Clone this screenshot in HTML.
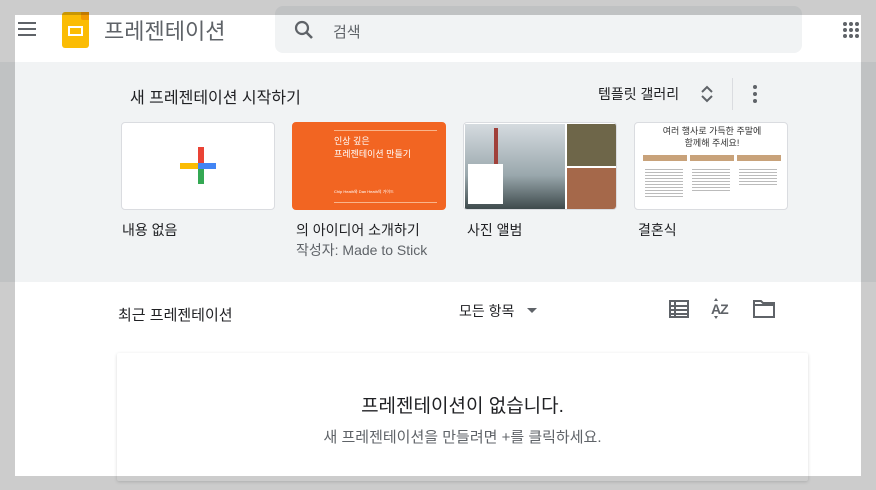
<!DOCTYPE html>
<html><head><meta charset="utf-8"><style>
*{margin:0;padding:0;box-sizing:border-box}
body{width:876px;height:490px;overflow:hidden;position:relative;background:#fff;font-family:"Liberation Sans","Noto Sans CJK KR",sans-serif;color:#202124}
.abs{position:absolute}
.ov{position:absolute;background:rgba(0,0,0,0.2);z-index:10}
.card{position:absolute;top:122px;width:154px;height:88px;border:1px solid #dadce0;border-radius:4px;background:#fff;overflow:hidden}
.lbl{position:absolute;top:220px;font-size:14px;color:#202124}
</style></head><body>
<div class="abs" style="left:18px;top:22px;width:18px;height:2px;background:#5f6368;box-shadow:0 6px 0 #5f6368,0 12px 0 #5f6368"></div>
<div class="abs" style="left:62px;top:12px;width:27px;height:36px;background:#fbbc04;border-radius:3px"></div>
<div class="abs" style="left:81px;top:12px;width:8px;height:8px;background:#f29900;border-bottom-left-radius:2px"></div>
<div class="abs" style="left:68px;top:26px;width:15px;height:10px;border:2px solid #fff"></div>
<div class="abs" style="left:104px;top:14px;font-size:22px;color:#5f6368">프레젠테이션</div>
<div class="abs" style="left:275px;top:6px;width:527px;height:47px;background:#f1f3f4;border-radius:8px"></div>
<svg class="abs" style="left:292px;top:18px" width="24" height="24" viewBox="0 0 24 24"><circle cx="10" cy="10" r="6" fill="none" stroke="#5f6368" stroke-width="2.2"/><path d="M14.5 14.5L20 20" stroke="#5f6368" stroke-width="2.6"/></svg>
<div class="abs" style="left:333px;top:21px;font-size:15px;color:#5f6368">검색</div>
<svg class="abs" style="left:843px;top:22px" width="18" height="16"><g fill="#5f6368"><circle cx="2" cy="2" r="2"/><circle cx="8" cy="2" r="2"/><circle cx="14" cy="2" r="2"/><circle cx="2" cy="8" r="2"/><circle cx="8" cy="8" r="2"/><circle cx="14" cy="8" r="2"/><circle cx="2" cy="14" r="2"/><circle cx="8" cy="14" r="2"/><circle cx="14" cy="14" r="2"/></g></svg>
<div class="abs" style="left:0;top:62px;width:876px;height:220px;background:#f1f3f4"></div>
<div class="abs" style="left:130px;top:84px;font-size:16px">새 프레젠테이션 시작하기</div>
<div class="abs" style="left:598px;top:84px;font-size:14px">템플릿 갤러리</div>
<svg class="abs" style="left:700px;top:84px" width="14" height="20"><path d="M2 8L7 3L12 8M2 12L7 17L12 12" fill="none" stroke="#5f6368" stroke-width="2"/></svg>
<div class="abs" style="left:732px;top:78px;width:1px;height:32px;background:#dadce0"></div>
<svg class="abs" style="left:752px;top:84px" width="6" height="20"><g fill="#5f6368"><circle cx="3" cy="3" r="2"/><circle cx="3" cy="10" r="2"/><circle cx="3" cy="17" r="2"/></g></svg>
<div class="card" style="left:121px">
 <div class="abs" style="left:76px;top:24px;width:6px;height:19px;background:#ea4335"></div>
 <div class="abs" style="left:58px;top:40px;width:18px;height:6px;background:#fbbc04"></div>
 <div class="abs" style="left:76px;top:40px;width:18px;height:6px;background:#4285f4"></div>
 <div class="abs" style="left:76px;top:46px;width:6px;height:15px;background:#34a853"></div>
</div>
<div class="card" style="left:292px;background:#f26522;border-color:#f26522">
 <div class="abs" style="left:41px;top:7px;width:103px;height:1px;background:#f9b48a"></div>
 <div class="abs" style="left:41px;top:12px;font-size:9px;color:#fff;line-height:13px">인상 깊은<br>프레젠테이션 만들기</div>
 <div class="abs" style="left:41px;top:66px;font-size:4px;color:#fff">Chip Heath와 Dan Heath의 가이드</div>
 <div class="abs" style="left:41px;top:79px;width:103px;height:1px;background:#f9b48a"></div>
</div>
<div class="card" style="left:463px">
 <div class="abs" style="left:1px;top:1px;width:100px;height:85px;background:linear-gradient(#d5dbdf,#9aa8ad 60%,#3e4a4c)"></div>
 <div class="abs" style="left:30px;top:5px;width:4px;height:45px;background:#a0403a"></div>
 <div class="abs" style="left:103px;top:1px;width:50px;height:42px;background:#6e6649"></div>
 <div class="abs" style="left:103px;top:45px;width:50px;height:42px;background:#a5684a"></div>
 <div class="abs" style="left:4px;top:41px;width:35px;height:40px;background:#fff"></div>
</div>
<div class="card" style="left:634px">
 <div class="abs" style="left:0;top:2px;width:154px;text-align:center;font-size:9px;line-height:12px;color:#333">여러 행사로 가득한 주말에<br>함께해 주세요!</div>
 <div class="abs" style="left:8px;top:32px;width:44px;height:6px;background:#c8a27a"></div>
 <div class="abs" style="left:55px;top:32px;width:44px;height:6px;background:#c8a27a"></div>
 <div class="abs" style="left:102px;top:32px;width:44px;height:6px;background:#c8a27a"></div>
 <div class="abs" style="left:10px;top:44px;width:38px;height:30px;background:repeating-linear-gradient(#fff 0 2px,#bbb 2px 3px)"></div>
 <div class="abs" style="left:57px;top:44px;width:38px;height:24px;background:repeating-linear-gradient(#fff 0 2px,#bbb 2px 3px)"></div>
 <div class="abs" style="left:104px;top:44px;width:38px;height:18px;background:repeating-linear-gradient(#fff 0 2px,#bbb 2px 3px)"></div>
</div>
<div class="lbl" style="left:122px">내용 없음</div>
<div class="lbl" style="left:296px">의 아이디어 소개하기</div>
<div class="abs" style="left:296px;top:240px;font-size:14px;color:#5f6368">작성자: Made to Stick</div>
<div class="lbl" style="left:467px">사진 앨범</div>
<div class="lbl" style="left:638px">결혼식</div>
<div class="abs" style="left:118px;top:304px;font-size:15px">최근 프레젠테이션</div>
<div class="abs" style="left:459px;top:301px;font-size:14px">모든 항목</div>
<div class="abs" style="left:527px;top:308px;width:0;height:0;border-left:5px solid transparent;border-right:5px solid transparent;border-top:5px solid #5f6368"></div>
<svg class="abs" style="left:669px;top:300px" width="20" height="18"><rect x="1" y="1" width="18" height="16" fill="none" stroke="#5f6368" stroke-width="2"/><path d="M1 6H19M1 10H19M1 14H19M6 1V17" stroke="#5f6368" stroke-width="2"/></svg>
<div class="abs" style="left:711px;top:301px;font-size:14px;font-weight:bold;color:#5f6368;letter-spacing:-1px">AZ</div>
<div class="abs" style="left:714px;top:298px;width:0;height:0;border-left:2px solid transparent;border-right:2px solid transparent;border-bottom:3px solid #5f6368"></div>
<div class="abs" style="left:714px;top:316px;width:0;height:0;border-left:2px solid transparent;border-right:2px solid transparent;border-top:3px solid #5f6368"></div>
<svg class="abs" style="left:753px;top:299px" width="22" height="19"><path d="M1 2H8L10 4H21V18H1Z" fill="none" stroke="#5f6368" stroke-width="2"/><path d="M1 6H21" stroke="#5f6368" stroke-width="2"/></svg>
<div class="abs" style="left:117px;top:353px;width:691px;height:128px;background:#fff;box-shadow:0 1px 3px rgba(60,64,67,0.2);border-radius:2px">
 <div class="abs" style="left:0;top:38px;width:691px;text-align:center;font-size:19px">프레젠테이션이 없습니다.</div>
 <div class="abs" style="left:0;top:73px;width:691px;text-align:center;font-size:15px;color:#5f6368">새 프레젠테이션을 만들려면 +를 클릭하세요.</div>
</div>
<div class="ov" style="left:0;top:0;width:876px;height:15px"></div>
<div class="ov" style="left:0;top:15px;width:15px;height:475px"></div>
<div class="ov" style="left:861px;top:15px;width:15px;height:475px"></div>
<div class="ov" style="left:15px;top:476px;width:846px;height:14px"></div>
</body></html>
